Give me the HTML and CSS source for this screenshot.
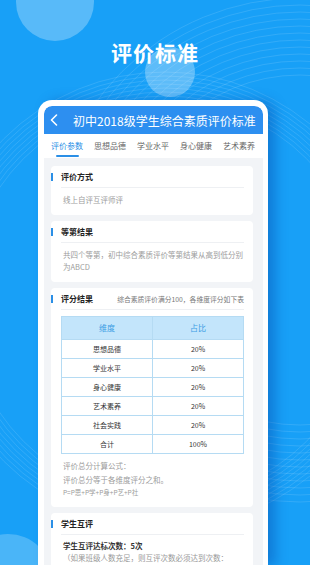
FILE: index.html
```html
<!DOCTYPE html>
<html>
<head>
    <title>评价标准</title>
    <meta charset="utf-8">
    <link rel="stylesheet" href="styles.css">
</head>
<body>
    <svg class="decor" width="310" height="565" viewBox="0 0 310 565">
        <circle cx="55" cy="2" r="39" fill="#fff" fill-opacity="0.28"/>
        <circle cx="170" cy="72" r="25" fill="#fff" fill-opacity="0.3"/>
        <circle cx="8" cy="578" r="44" fill="#fff" fill-opacity="0.22"/>
        <g fill="none" stroke="#fff" stroke-opacity="0.2" stroke-width="0.6">
            <circle cx="165" cy="300" r="200"/>
            <circle cx="165" cy="300" r="204"/>
            <circle cx="165" cy="300" r="208"/>
            <circle cx="165" cy="300" r="212"/>
            <circle cx="165" cy="300" r="216"/>
            <circle cx="165" cy="300" r="220"/>
            <circle cx="165" cy="300" r="224"/>
            <circle cx="165" cy="300" r="228"/>
            <circle cx="300" cy="250" r="175"/>
            <circle cx="300" cy="250" r="182"/>
            <circle cx="300" cy="250" r="189"/>
            <circle cx="300" cy="250" r="196"/>
            <circle cx="300" cy="250" r="203"/>
            <circle cx="300" cy="250" r="210"/>
            <circle cx="300" cy="250" r="217"/>
            <circle cx="300" cy="250" r="224"/>
            <circle cx="300" cy="250" r="231"/>
            <circle cx="300" cy="250" r="238"/>
            <circle cx="300" cy="250" r="245"/>
            <circle cx="300" cy="250" r="252"/>
        </g>
    </svg>

    <h1 class="page-title">评价标准</h1>

    <div class="phone">
        <div class="nav">
            <svg class="back" width="8" height="12" viewBox="0 0 8 12">
                <path d="M6.5 1 L1.5 6 L6.5 11" fill="none" stroke="#fff" stroke-width="1.6" stroke-linecap="round" stroke-linejoin="round"/>
            </svg>
            <span class="nav-title">初中2018级学生综合素质评价标准</span>
        </div>

        <div class="tabs">
            <span class="tab active">评价参数</span>
            <span class="tab">思想品德</span>
            <span class="tab">学业水平</span>
            <span class="tab">身心健康</span>
            <span class="tab">艺术素养</span>
        </div>

        <div class="content">
            <div class="card">
                <div class="card-head"><span class="card-title">评价方式</span></div>
                <div class="card-body">线上自评互评师评</div>
            </div>

            <div class="card">
                <div class="card-head"><span class="card-title">等第结果</span></div>
                <div class="card-body">共四个等第，初中综合素质评价等第结果从高到低分别为ABCD</div>
            </div>

            <div class="card">
                <div class="card-head">
                    <span class="card-title">评分结果</span>
                    <span class="card-note">综合素质评价满分100，各维度评分如下表</span>
                </div>
                <table class="score-table">
                    <tr><th>维度</th><th>占比</th></tr>
                    <tr><td>思想品德</td><td>20%</td></tr>
                    <tr><td>学业水平</td><td>20%</td></tr>
                    <tr><td>身心健康</td><td>20%</td></tr>
                    <tr><td>艺术素养</td><td>20%</td></tr>
                    <tr><td>社会实践</td><td>20%</td></tr>
                    <tr><td>合计</td><td>100%</td></tr>
                </table>
                <div class="card-body formula">
                    评价总分计算公式：<br>
                    评价总分等于各维度评分之和。
                    <div class="formula-line">P=P思+P学+P身+P艺+P社</div>
                </div>
            </div>

            <div class="card">
                <div class="card-head"><span class="card-title">学生互评</span></div>
                <div class="card-body peer">
                    <div class="peer-count">学生互评达标次数：5次</div>
                    <div>（如果班级人数充足，则互评次数必须达到次数：</div>
                </div>
            </div>
        </div>
    </div>
</body>
</html>
```

FILE: styles.css
```css
body {
    margin: 0;
    width: 310px;
    height: 565px;
    overflow: hidden;
    position: relative;
    background: #18a0f7;
    font-family: "Noto Sans CJK SC", "Noto Sans", sans-serif;
}
.decor {
    position: absolute;
    left: 0;
    top: 0;
}
.page-title {
    position: relative;
    margin: 0;
    padding-top: 37px;
    line-height: 30px;
    font-size: 21px;
    font-weight: bold;
    color: #fff;
    text-align: center;
    letter-spacing: 1px;
}
.phone {
    position: relative;
    margin: 33px 0 0 38px;
    width: 219px;
    height: 460px;
    border: 6px solid #fff;
    border-right-width: 5px;
    border-bottom: none;
    border-radius: 14px 14px 0 0;
    background: #f2f4f7;
    overflow: hidden;
    box-shadow: 8px 0 12px rgba(0, 60, 160, 0.35);
}
.nav {
    height: 28px;
    display: flex;
    align-items: center;
    padding-left: 6px;
    background: #2d8ff0;
    border-radius: 8px 8px 0 0;
}
.back {
    margin-right: 15px;
}
.nav-title {
    font-size: 12px;
    color: #fff;
    white-space: nowrap;
}
.tabs {
    height: 24px;
    display: flex;
    gap: 11px;
    padding-left: 7px;
    background: #fff;
    white-space: nowrap;
}
.tab {
    display: flex;
    flex-direction: column;
    align-items: center;
    padding-top: 7px;
    font-size: 8px;
    line-height: 10px;
    color: #666;
}
.tab.active {
    color: #2b8fe6;
}
.tab.active::after {
    content: "";
    display: block;
    width: 23px;
    height: 2px;
    margin-top: 4px;
    border-radius: 1px;
    background: #2b8fe6;
}
.content {
    display: flex;
    flex-direction: column;
    gap: 6px;
    padding: 8px 10px 0 7px;
}
.card {
    background: #fff;
    border-radius: 4px;
    padding: 0 9px 0 10px;
}
.card-head {
    display: flex;
    align-items: center;
    padding: 6px 0 5px;
    line-height: 10px;
    border-bottom: 1px solid #eef0f3;
}
.card-head::before {
    content: "";
    width: 2px;
    height: 8px;
    margin: 0 8px 0 -10px;
    background: #2b8fe6;
}
.card-title {
    font-size: 8px;
    font-weight: bold;
    color: #222;
}
.card-note {
    margin-left: auto;
    font-size: 6.8px;
    color: #777;
    white-space: nowrap;
}
.card-body {
    padding: 6px 0 8px 2px;
    font-size: 7.5px;
    line-height: 12.5px;
    color: #9c9c9c;
}
.score-table {
    width: 183px;
    margin-top: 6px;
    border-collapse: collapse;
    text-align: center;
}
.score-table th,
.score-table td {
    border: 1px solid #b5dbf3;
    padding: 0;
    width: 50%;
}
.score-table th {
    height: 22px;
    background: #c3e5fb;
    font-size: 8px;
    font-weight: normal;
    color: #3c9de4;
}
.score-table td {
    height: 18px;
    font-size: 7px;
    color: #333;
}
.formula {
    padding-top: 5px;
    padding-bottom: 9px;
    line-height: 14px;
}
.formula-line {
    font-size: 6.5px;
    line-height: 11px;
}
.peer {
    padding-top: 4px;
    line-height: 12px;
    color: #999;
}
.peer-count {
    font-weight: bold;
    color: #333;
    line-height: 13px;
}
```
